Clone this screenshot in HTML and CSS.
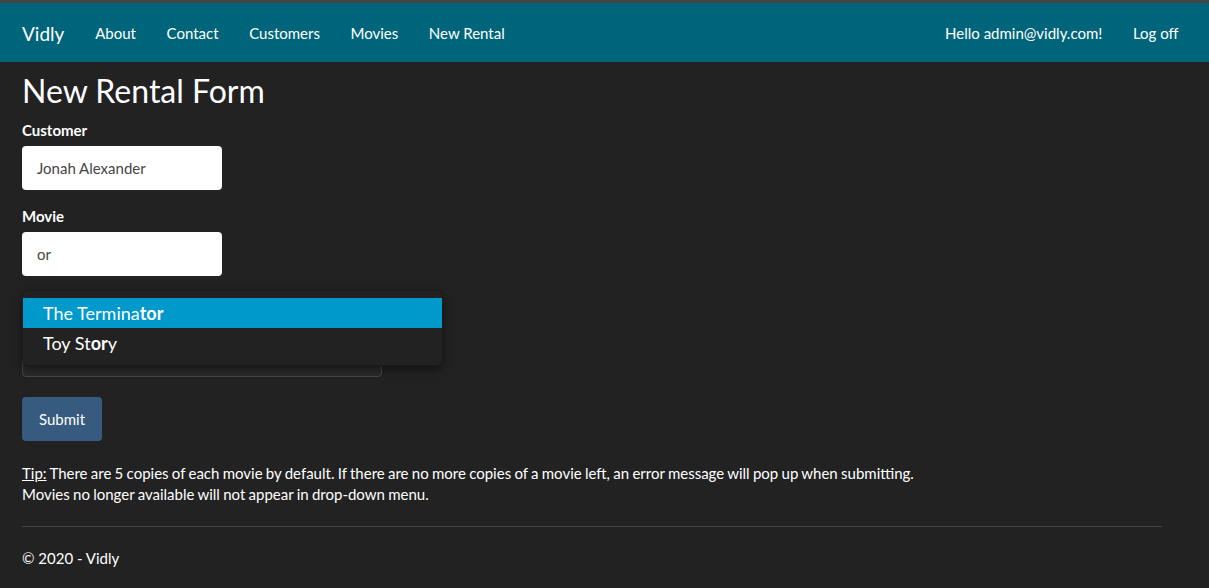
FILE: index.html
```html
<!DOCTYPE html>
<html>
<head>
<meta charset="utf-8">
<title>New Rental Form - Vidly</title>
<link rel="stylesheet" href="styles.css">
</head>
<body>
<div class="topstrip"></div>
<nav class="navbar">
  <div class="nav-left">
    <a class="brand" href="#">Vidly</a>
    <a class="nav-link" href="#">About</a>
    <a class="nav-link" href="#">Contact</a>
    <a class="nav-link" href="#">Customers</a>
    <a class="nav-link" href="#">Movies</a>
    <a class="nav-link" href="#">New Rental</a>
  </div>
  <div class="nav-right">
    <a class="nav-link" href="#">Hello admin@vidly.com!</a>
    <a class="nav-link" href="#">Log off</a>
  </div>
</nav>
<main class="content">
  <h2 class="title">New Rental Form</h2>
  <form class="form">
    <div class="group">
      <label class="label">Customer</label>
      <div class="input">Jonah Alexander</div>
    </div>
    <div class="group">
      <label class="label">Movie</label>
      <div class="input">or</div>
      <div class="typeahead-wrap">
        <div class="movie-list"></div>
        <div class="dropdown">
          <div class="item active">The Termina<b>tor</b></div>
          <div class="item">Toy St<b>or</b>y</div>
        </div>
      </div>
    </div>
    <button class="btn" type="button">Submit</button>
  </form>
  <p class="tip"><u>Tip:</u> There are 5 copies of each movie by default. If there are no more copies of a movie left, an error message will pop up when submitting.<br>Movies no longer available will not appear in drop-down menu.</p>
  <hr class="rule">
  <footer class="footer">© 2020 - Vidly</footer>
</main>
</body>
</html>
```

FILE: styles.css
```css
* { box-sizing: border-box; }
html, body {
  margin: 0;
  padding: 0;
  background: #222222;
  color: #ffffff;
  font-family: Lato, "Liberation Sans", sans-serif;
  font-size: 15px;
  line-height: 1.42857;
}
.topstrip {
  height: 3px;
  background: #434343;
}
.navbar {
  height: 59px;
  background: #00657a;
  display: flex;
  justify-content: space-between;
  align-items: center;
  padding: 2px 16px 0 7px;
}
.nav-left, .nav-right {
  display: flex;
  align-items: center;
}
.brand {
  color: #fff;
  text-decoration: none;
  font-size: 19px;
  padding: 0 15px;
}
.nav-link {
  color: #fff;
  text-decoration: none;
  font-size: 15px;
  padding: 0 15.3px;
}
.nav-left .brand + .nav-link { padding-left: 15.8px; }
.nav-right .nav-link:last-child { padding-right: 14.5px; }
.content {
  width: 1140px;
  margin-left: 22px;
}
.title {
  font-size: 32px;
  font-weight: 400;
  line-height: 1.1;
  margin: 11px 0 12px;
}
.group {
  margin-bottom: 16px;
}
.label {
  display: block;
  font-weight: 700;
  margin-bottom: 5px;
  line-height: 21px;
}
.input {
  width: 200px;
  height: 44px;
  background: #fff;
  color: #464545;
  border-radius: 4px;
  padding: 10px 15px;
  line-height: 24px;
}
.typeahead-wrap {
  position: relative;
  margin-top: 17px;
  height: 84px;
}
.movie-list {
  position: absolute;
  left: 0;
  top: 4px;
  width: 360px;
  height: 80px;
  background: #2a2a2a;
  border: 1px solid #464646;
  border-radius: 4px;
}
.dropdown {
  position: absolute;
  left: 0;
  top: -3px;
  width: 421px;
  padding: 7px 0 7px;
  background: #222;
  border: 1px solid #1b1b1b;
  border-radius: 6px;
  box-shadow: 0 4px 10px rgba(0,0,0,0.45);
}
.item {
  height: 30px;
  line-height: 30px;
  padding-left: 20px;
  font-size: 18px;
  color: #fff;
}
.item b { font-weight: 700; }
.item.active {
  background: #0099cc;
}
.btn {
  display: block;
  width: 80px;
  height: 44px;
  margin-top: 20px;
  background: #375a7f;
  color: #fff;
  border: 0;
  border-radius: 4px;
  font-family: Lato, "Liberation Sans", sans-serif;
  font-size: 15px;
  padding: 0;
}
.tip {
  margin: 22px 0 0;
  line-height: 21px;
  word-spacing: -0.55px;
}
.rule {
  margin: 21px 0 0;
  border: 0;
  border-top: 1px solid #464646;
  height: 0;
}
.footer {
  margin-top: 21px;
  line-height: 21px;
}
```
